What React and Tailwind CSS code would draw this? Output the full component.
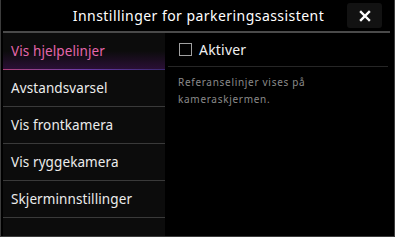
const menuItems = [
  'Vis hjelpelinjer',
  'Avstandsvarsel',
  'Vis frontkamera',
  'Vis ryggekamera',
  'Skjerminnstillinger',
];

export default function App() {
  const active = 0;

  return (
    <div className="w-[395px] h-[237px] bg-black border border-[#3c3c3c] border-t-0 flex flex-col overflow-hidden" style={{ fontFamily: '"Noto Sans", "DejaVu Sans", sans-serif' }}>

      {/* Header */}
      <header className="h-[31px] flex items-center relative px-[2px]">
        <h1 className="flex-1 text-center text-white text-[14px] tracking-[0.45px] pl-[2px]">
          Innstillinger for parkeringsassistent
        </h1>
        <button className="absolute right-[12px] top-[3px] w-[35px] h-[25px] rounded-[3px] bg-[#121212] flex items-center justify-center">
          <svg width="12" height="12" viewBox="0 0 12 12">
            <path d="M2 2 L10 10 M10 2 L2 10" stroke="white" strokeWidth="2.4" strokeLinecap="square" />
          </svg>
        </button>
      </header>
      <div className="mx-[2px] mr-[4px] h-[2px] bg-[#4a4a4a]"></div>

      {/* Body */}
      <div className="flex-1 flex pl-[2px]">

        {/* Menu */}
        <nav className="w-[162px] bg-[#0c0c0c] flex flex-col">
          {menuItems.map((label, i) => (
            <div key={label} className="h-[37px] flex flex-col">
              <div className={`flex-1 flex items-center pl-[8px] text-[13.5px] tracking-[0.1px] ${i === active ? 'text-[#e566ac] bg-gradient-to-b from-transparent via-transparent to-[#2a0f35]' : 'text-[#ececec]'}`}>
                {label}
              </div>
              <div className={`h-[1.5px] ${i === active ? 'bg-gradient-to-r from-[#b0407a] via-[#6a3aa8] to-[#3b2a70]' : 'bg-[#3a3a3a]'}`}></div>
            </div>
          ))}
        </nav>

        {/* Detail */}
        <section className="flex-1 flex flex-col pl-[3px] pr-[6px]">
          <div className="h-[34px] flex items-center gap-[7px] pl-[11px] border-b border-[#262626]">
            <span className="w-[13px] h-[13px] border-[1.5px] border-[#a0a0a0]"></span>
            <span className="text-[14px] tracking-[0.2px] text-[#f0f0f0]">Aktiver</span>
          </div>
          <p className="pl-[10px] pt-[7px] text-[10px] leading-[17px] tracking-[0.7px] text-[#8a8a8a]">
            Referanselinjer vises på<br />kameraskjermen.
          </p>
        </section>

      </div>
    </div>
  );
}
